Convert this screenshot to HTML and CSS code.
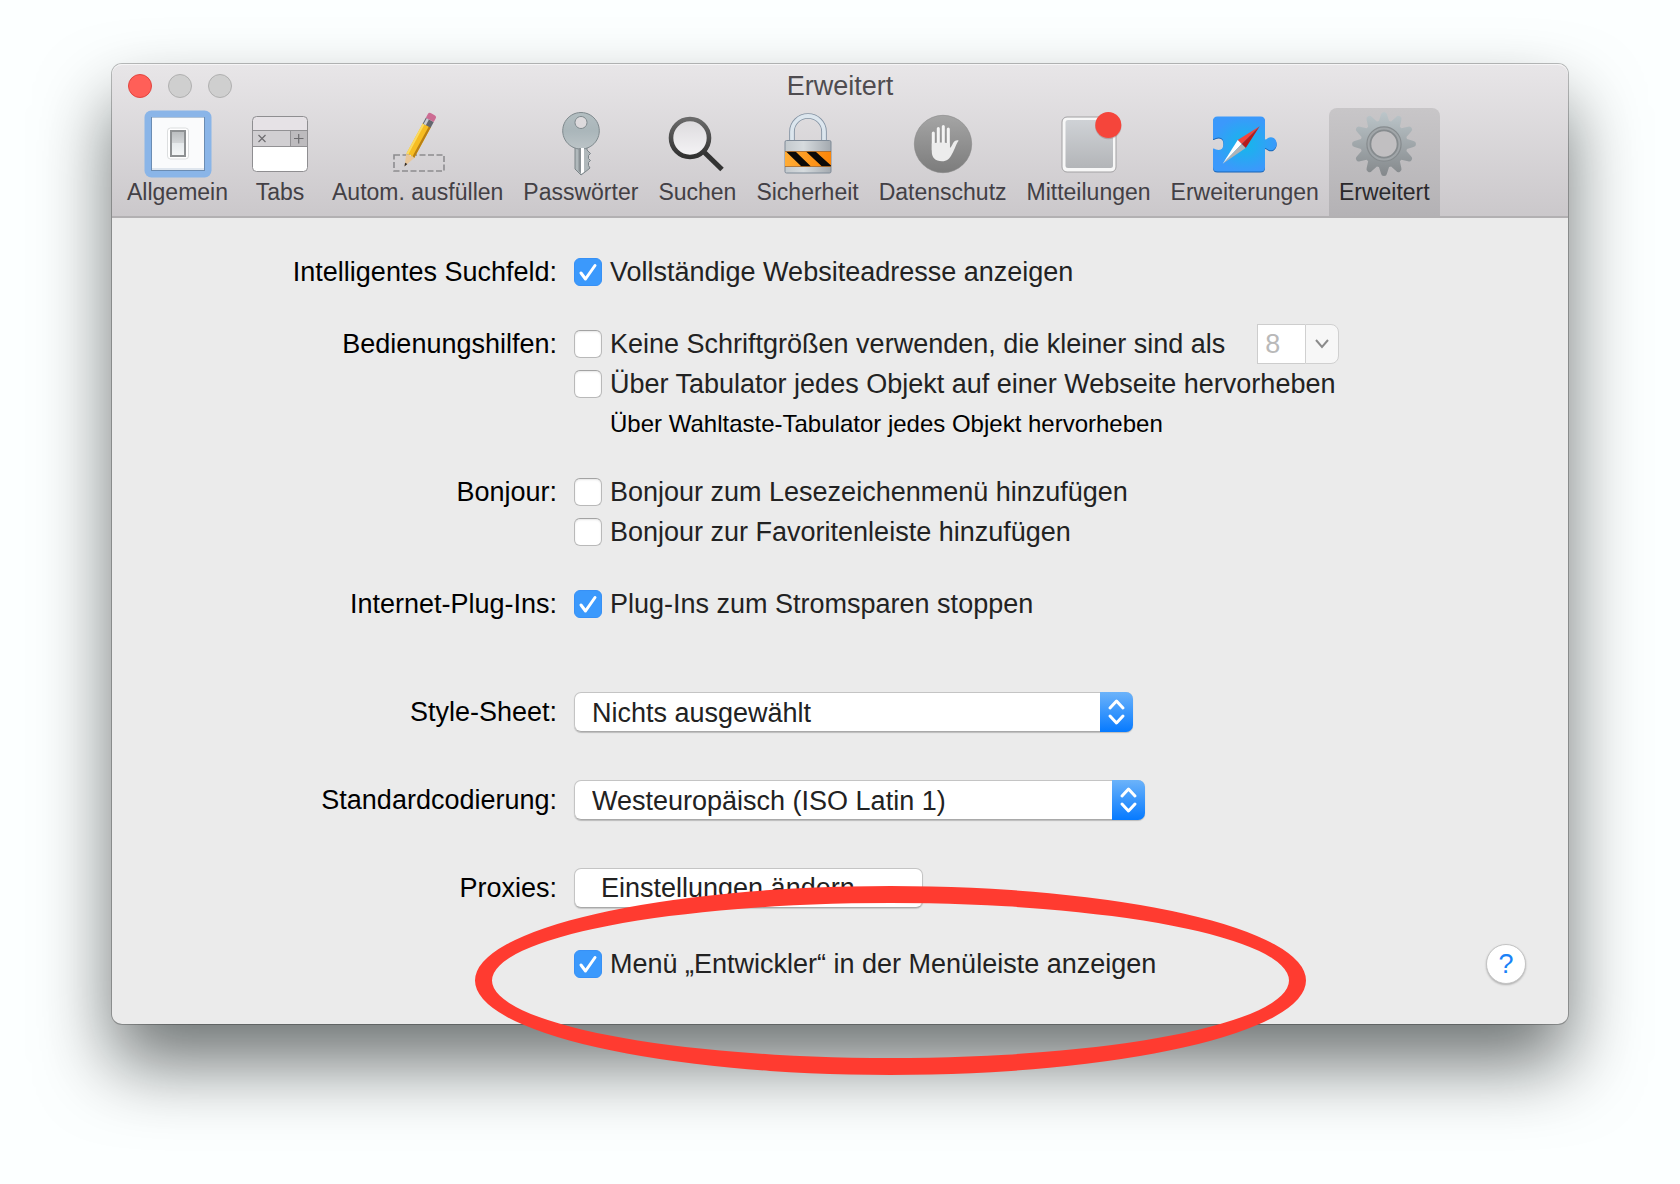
FILE: index.html
```
<!DOCTYPE html>
<html lang="de">
<head>
    <meta charset="UTF-8">
    <meta name="viewport" content="width=device-width, initial-scale=1.0">
    <title>Erweitert</title>
    <link rel="stylesheet" href="styles.css">
</head>
<body>
    <main class="window">
        <header class="toolbar">
            <div class="titlebar">
                <div class="lights">
                    <button type="button" class="light light-close" aria-label="Schließen"></button>
                    <button type="button" class="light" aria-label="Minimieren" disabled></button>
                    <button type="button" class="light" aria-label="Zoomen" disabled></button>
                </div>
                <h1>Erweitert</h1>
            </div>
            <nav class="tabs">
                <button type="button" class="tab">
                    <svg class="icon" viewBox="0 0 64 64" aria-hidden="true">
                        <defs>
                            <linearGradient id="switch" x1="0" y1="0" x2="0" y2="1">
                                <stop offset="0" stop-color="#b9bcbe"/>
                                <stop offset=".48" stop-color="#d3d6d8"/>
                                <stop offset=".5" stop-color="#e6eaec"/>
                                <stop offset="1" stop-color="#f4f6f7"/>
                            </linearGradient>
                        </defs>
                        <rect x="-1.5" y="-1.5" width="67" height="67" rx="7" fill="#8ab5e8"/>
                        <rect x="5" y="5" width="54" height="54" fill="#6b8cb2"/>
                        <rect x="6" y="5.5" width="52" height="51" fill="#fafbfc"/>
                        <rect x="6" y="56" width="52" height="2" fill="#dfe6ee"/>
                        <rect x="21.5" y="16" width="21" height="31" rx="3" fill="#fff" stroke="#dcdedf"/>
                        <rect x="25" y="19" width="14" height="25" fill="url(#switch)" stroke="#8e9193" stroke-width="2"/>
                    </svg>
                    <span>Allgemein</span>
                </button>
                <button type="button" class="tab">
                    <svg class="icon" viewBox="0 0 64 64" aria-hidden="true">
                        <rect x="4.5" y="4.5" width="55" height="55" rx="4" fill="#fff"/>
                        <path d="M4.5 18.5V8.5a4 4 0 0 1 4-4h47a4 4 0 0 1 4 4v10z" fill="#e6e2e6"/>
                        <path d="M4.5 18.5h38v16h-38z" fill="#d1cfd2"/>
                        <path d="M42.5 18.5h17v16h-17z" fill="#bdbbbe"/>
                        <path d="M4.5 18.5h55M4.5 34.5h55M42.5 18.5v16" stroke="#929194" fill="none"/>
                        <rect x="4.5" y="4.5" width="55" height="55" rx="4" fill="none" stroke="#8f8e91"/>
                        <path d="M10.5 23l7 7m0-7l-7 7M46 26.5h9.500M50.7 22v9.5" stroke="#6d6c6f" stroke-width="1.2" fill="none"/>
                    </svg>
                    <span>Tabs</span>
                </button>
                <button type="button" class="tab">
                    <svg class="icon" viewBox="0 0 64 64" aria-hidden="true">
                        <rect x="8" y="43" width="50" height="16" fill="none" stroke="#8d8c8f" stroke-width="1.6" stroke-dasharray="6 2.5"/>
                        <g transform="translate(18.5 54.5) rotate(28.5)">
                            <path d="M0 0L-4.5-12h9z" fill="#e9c79a"/>
                            <path d="M0 0l-1.3-3.5h2.6z" fill="#2d2a28"/>
                            <path d="M-4.5-12l1.5-1.5 1.5 1.5 1.5-1.5 1.5 1.5L3-13.5 4.5-12v-35h-9z" fill="#f6bd22"/>
                            <path d="M-4.5-12v-35h2v34z" fill="#fadb62"/>
                            <path d="M2.2-13v-34h2.3v35z" fill="#b97f12"/>
                            <path d="M-4.5-53h9v6.5h-9z" fill="#63666f"/>
                            <path d="M-3.5-53h2.5v6.5h-2.5z" fill="#c9ccd4"/>
                            <path d="M-4.5-53v-4q0-2.5 2.5-2.5h4q2.5 0 2.5 2.5v4z" fill="#cc6c93"/>
                        </g>
                    </svg>
                    <span>Autom. ausfüllen</span>
                </button>
                <button type="button" class="tab">
                    <svg class="icon" viewBox="0 0 64 64" aria-hidden="true">
                        <defs>
                            <linearGradient id="steel" x1="0" y1="0" x2="0" y2="1">
                                <stop offset="0" stop-color="#b3bec1"/>
                                <stop offset=".5" stop-color="#aab6ba"/>
                                <stop offset="1" stop-color="#bcc4c7"/>
                            </linearGradient>
                        </defs>
                        <path d="M26 36v21l6 6 6-4.5 3-2.500-1.5-2.500v-3l2-2-2-2v-3l2-2-3.5-3.5V36z" fill="#b0b8bb" stroke="#7b8488"/>
                        <path fill-rule="evenodd" d="M32 .5a18.300 18.300 0 1 0 .01 0zM32 4.5a6 6 0 1 1-.01 0z" fill="url(#steel)" stroke="#7f898d"/>
                        <path d="M29.5 36h3v26l-3-3z" fill="#8a9195"/>
                        <path d="M32 36h3v24l-3 2z" fill="#fff"/>
                    </svg>
                    <span>Passwörter</span>
                </button>
                <button type="button" class="tab">
                    <svg class="icon" viewBox="0 0 64 64" aria-hidden="true">
                        <defs>
                            <linearGradient id="rim" x1="0" y1="0" x2="0" y2="1">
                                <stop offset="0" stop-color="#6a6a6a"/>
                                <stop offset="1" stop-color="#303030"/>
                            </linearGradient>
                            <linearGradient id="glass" x1="0" y1="0" x2="0" y2="1">
                                <stop offset="0" stop-color="#dcdadd"/>
                                <stop offset="1" stop-color="#f5f4f6"/>
                            </linearGradient>
                        </defs>
                        <path d="M39 40l18 17.5" stroke="#333" stroke-width="5" fill="none"/>
                        <circle cx="25" cy="26" r="19" fill="url(#glass)" stroke="url(#rim)" stroke-width="4.6"/>
                    </svg>
                    <span>Suchen</span>
                </button>
                <button type="button" class="tab">
                    <svg class="icon" viewBox="0 0 64 64" aria-hidden="true">
                        <defs>
                            <linearGradient id="lock" x1="0" y1="0" x2="1" y2="0">
                                <stop offset="0" stop-color="#c3c9cd"/>
                                <stop offset=".4" stop-color="#d6dbde"/>
                                <stop offset="1" stop-color="#a3a9af"/>
                            </linearGradient>
                            <linearGradient id="orange" x1="0" y1="0" x2="1" y2="0">
                                <stop offset="0" stop-color="#ffac35"/>
                                <stop offset="1" stop-color="#fb8508"/>
                            </linearGradient>
                        </defs>
                        <path d="M16 30V19.500a16 15.500 0 0 1 32 0V30" stroke="#8493a3" stroke-width="5.6" fill="none"/>
                        <path d="M16 30V19.500a16 15.500 0 0 1 32 0V30" stroke="#dce6ee" stroke-width="3.8" fill="none"/>
                        <rect x="9" y="28.5" width="46" height="32.5" rx="1.5" fill="url(#lock)" stroke="#7f8b98"/>
                        <path d="M9 39.5h46v15H9z" fill="url(#orange)"/>
                        <path d="M10 39.5h9.500l15.500 15H25.500zM30 39.5h9.500L55 53.500v1h-9z" fill="#0c0a08"/>
                        <path d="M9 39.5h46M9 54.5h46" stroke="#a6672a" stroke-width=".8"/>
                    </svg>
                    <span>Sicherheit</span>
                </button>
                <button type="button" class="tab">
                    <svg class="icon" viewBox="0 0 64 64" aria-hidden="true">
                        <defs>
                            <linearGradient id="disc" x1="0" y1="0" x2="0" y2="1">
                                <stop offset="0" stop-color="#a5a5a5"/>
                                <stop offset="1" stop-color="#7c7c7c"/>
                            </linearGradient>
                        </defs>
                        <circle cx="32" cy="32" r="28.7" fill="url(#disc)" stroke="#868686" stroke-width=".6"/>
                        <path d="M22.3 21v17M27.3 16.500V36M32.3 14.500V36M37.3 17V36" stroke="#f4f4f4" stroke-width="3" stroke-linecap="round" fill="none"/>
                        <path d="M20.8 31.500q9-2 18 0v4.500c2-1 3-5.500 5-7 1.500-1 3.500-.8 3.800-.3-2.600 3-3.600 8.300-6.600 13.300-2.500 5-5 7.300-10 7.300-7 0-10.200-4.300-10.200-9.300z" fill="#ececec"/>
                    </svg>
                    <span>Datenschutz</span>
                </button>
                <button type="button" class="tab">
                    <svg class="icon" viewBox="0 0 64 64" aria-hidden="true">
                        <defs>
                            <linearGradient id="tile" x1="0" y1="0" x2="0" y2="1">
                                <stop offset="0" stop-color="#cfd2d6"/>
                                <stop offset="1" stop-color="#b3b5b8"/>
                            </linearGradient>
                        </defs>
                        <rect x="5" y="5" width="54" height="55" rx="5" fill="#f7f7f7" stroke="#a2a1a3"/>
                        <rect x="8.5" y="8" width="47.5" height="48" rx="2.5" fill="url(#tile)"/>
                        <circle cx="51.3" cy="14" r="13.2" fill="#8c5a5a" opacity=".35"/>
                        <circle cx="51.3" cy="13" r="13" fill="#f5453b"/>
                    </svg>
                    <span>Mitteilungen</span>
                </button>
                <button type="button" class="tab">
                    <svg class="icon" viewBox="0 0 64 64" aria-hidden="true">
                        <defs>
                            <radialGradient id="puzzle">
                                <stop offset="0" stop-color="#14b8ea"/>
                                <stop offset="1" stop-color="#3b99fb"/>
                            </radialGradient>
                            <path id="piece" d="M4.5 4.5h43q4.500 0 4.500 4.500v18.500q1.500 0 3-1.500a5.800 6.600 0 1 1 0 11.500q-1.500-1.500-3-1.500v19q0 4.500-4.500 4.500h-43Q0 59.500 0 55V36.500q1.500 0 3 1 7.500 2 7.500-5.800T3 26q-1.500 1-3 1V9q0-4.500 4.500-4.500z"/>
                        </defs>
                        <use href="#piece" y="1" fill="#1763b5"/>
                        <use href="#piece" fill="url(#puzzle)"/>
                        <path d="M46.7 14.3L24.7 28l4 4z" fill="#f4443c"/>
                        <path d="M46.7 14.3L32.7 36l-4-4z" fill="#b81a1a"/>
                        <path d="M9.7 51.7L24.7 28l4 4z" fill="#fff"/>
                        <path d="M9.7 51.7L32.7 36l-4-4z" fill="#b0b3b6"/>
                    </svg>
                    <span>Erweiterungen</span>
                </button>
                <button type="button" class="tab active" aria-current="page">
                    <svg class="icon" viewBox="0 0 64 64" aria-hidden="true">
                        <defs>
                            <linearGradient id="metal" x1="0" y1="0" x2="0" y2="1">
                                <stop offset="0" stop-color="#bcc6ca"/>
                                <stop offset="1" stop-color="#84888b"/>
                            </linearGradient>
                            <path id="tooth" d="M26 12l3-9.500q.4-2.500 3-2.500t3 2.500l3 9.500z"/>
                            <clipPath id="gear">
                                <circle cx="32" cy="32" r="23.5"/>
                                <use href="#tooth"/>
                                <use href="#tooth" transform="rotate(30 32 32)"/>
                                <use href="#tooth" transform="rotate(60 32 32)"/>
                                <use href="#tooth" transform="rotate(90 32 32)"/>
                                <use href="#tooth" transform="rotate(120 32 32)"/>
                                <use href="#tooth" transform="rotate(150 32 32)"/>
                                <use href="#tooth" transform="rotate(180 32 32)"/>
                                <use href="#tooth" transform="rotate(210 32 32)"/>
                                <use href="#tooth" transform="rotate(240 32 32)"/>
                                <use href="#tooth" transform="rotate(270 32 32)"/>
                                <use href="#tooth" transform="rotate(300 32 32)"/>
                                <use href="#tooth" transform="rotate(330 32 32)"/>
                            </clipPath>
                        </defs>
                        <rect width="64" height="64" fill="url(#metal)" clip-path="url(#gear)"/>
                        <circle cx="32" cy="32" r="15.2" fill="#c1bfc1" stroke="#868b8e" stroke-width="5"/>
                        <circle cx="32" cy="32" r="15.5" fill="none" stroke="#a1a6a9" stroke-width="2"/>
                    </svg>
                    <span>Erweitert</span>
                </button>
            </nav>
        </header>

        <form class="settings">
            <div class="row">
                <div class="caption">Intelligentes Suchfeld:</div>
                <div class="fields">
                    <label class="check"><input type="checkbox" checked> Vollständige Websiteadresse anzeigen</label>
                </div>
            </div>
            <div class="row">
                <div class="caption">Bedienungshilfen:</div>
                <div class="fields">
                    <div class="inline">
                        <label class="check"><input type="checkbox"> Keine Schriftgrößen verwenden, die kleiner sind als</label>
                        <div class="combo">
                            <input type="text" value="8" aria-label="Minimale Schriftgröße" disabled>
                            <button type="button" aria-label="Größe wählen" disabled>
                                <svg viewBox="0 0 16 12" aria-hidden="true"><path d="M2 2l6 7 6-7"/></svg>
                            </button>
                        </div>
                    </div>
                    <label class="check"><input type="checkbox"> Über Tabulator jedes Objekt auf einer Webseite hervorheben</label>
                    <p class="hint">Über Wahltaste-Tabulator jedes Objekt hervorheben</p>
                </div>
            </div>
            <div class="row row-bonjour">
                <div class="caption">Bonjour:</div>
                <div class="fields">
                    <label class="check"><input type="checkbox"> Bonjour zum Lesezeichenmenü hinzufügen</label>
                    <label class="check"><input type="checkbox"> Bonjour zur Favoritenleiste hinzufügen</label>
                </div>
            </div>
            <div class="row">
                <div class="caption">Internet-Plug-Ins:</div>
                <div class="fields">
                    <label class="check"><input type="checkbox" checked> Plug-Ins zum Stromsparen stoppen</label>
                </div>
            </div>
            <div class="row row-stylesheet">
                <label class="caption" for="stylesheet">Style-Sheet:</label>
                <div class="popup popup-stylesheet">
                    <select id="stylesheet">
                        <option>Nichts ausgewählt</option>
                    </select>
                    <svg class="arrows" viewBox="0 0 33 40" aria-hidden="true"><path d="M10 16l6.500-7 6.500 7M10 24l6.500 7 6.500-7"/></svg>
                </div>
            </div>
            <div class="row row-popup">
                <label class="caption" for="encoding">Standardcodierung:</label>
                <div class="popup popup-encoding">
                    <select id="encoding">
                        <option>Westeuropäisch (ISO Latin 1)</option>
                    </select>
                    <svg class="arrows" viewBox="0 0 33 40" aria-hidden="true"><path d="M10 16l6.500-7 6.500 7M10 24l6.500 7 6.500-7"/></svg>
                </div>
            </div>
            <div class="row row-popup">
                <div class="caption">Proxies:</div>
                <button type="button" class="push">Einstellungen ändern …</button>
            </div>
            <div class="row row-last">
                <div class="footer">
                    <label class="check"><input type="checkbox" checked> Menü „Entwickler“ in der Menüleiste anzeigen</label>
                    <button type="button" class="help" aria-label="Hilfe">?</button>
                </div>
            </div>
        </form>

        <!-- Markierung um die Option "Entwickler" -->
        <div class="marker"></div>
    </main>
</body>
</html>
```
FILE: styles.css
```
* {
    box-sizing: border-box;
}
body {
    margin: 0;
    padding: 64px 112px 160px;
    background-color: #fcffff;
    font-family: "Liberation Sans", Arial, sans-serif;
    font-size: 27px;
    line-height: 40px;
    color: #000;
}
button, input, select {
    font: inherit;
    margin: 0;
}
.window {
    position: relative;
    background-color: #ebebeb;
    border-radius: 10px;
    box-shadow: 0 0 0 1px rgba(0, 0, 0, 0.25), 0 40px 72px rgba(0, 8, 8, 0.56);
}

/* Titel und Symbolleiste */
.toolbar {
    background: linear-gradient(#e8e6e8, #cbc8cb);
    border-bottom: 2px solid #b2b0b2;
    border-radius: 10px 10px 0 0;
    box-shadow: inset 0 1px 0 #f6f5f6;
}
.titlebar {
    display: grid;
    grid-template-columns: 1fr auto 1fr;
    align-items: center;
    height: 44px;
    padding: 0 16px;
}
.titlebar h1 {
    margin: 0;
    font-size: 27px;
    font-weight: normal;
    color: #4f4c50;
}
.lights {
    display: flex;
    gap: 16px;
}
.light {
    width: 24px;
    height: 24px;
    padding: 0;
    border: 1px solid #b0b0b0;
    border-radius: 50%;
    background-color: #cfcfcf;
}
.light-close {
    border-color: #e2453f;
    background-color: #ff5f58;
}
.tabs {
    display: flex;
    padding: 0 5px;
}
.tab {
    display: flex;
    flex-direction: column;
    align-items: center;
    gap: 2px;
    height: 108px;
    padding: 4px 10px 0;
    border: none;
    border-radius: 8px 8px 0 0;
    background: none;
    font-size: 23px;
    line-height: 28px;
    white-space: nowrap;
    color: #434045;
}
.tab.active {
    background: linear-gradient(#c8c6c8, #b4b2b5);
    color: #2b292c;
}
.icon {
    width: 64px;
    height: 64px;
    overflow: visible;
}

/* Einstellungen */
.settings {
    display: flex;
    flex-direction: column;
    gap: 32px;
    padding: 34px 42px 40px 0;
}
.row {
    display: grid;
    grid-template-columns: 445px 1fr;
    column-gap: 17px;
}
.row-bonjour {
    margin-top: -4px;
}
.row-stylesheet {
    margin-top: 36px;
}
.row-popup {
    margin-top: 16px;
}
.row-last {
    margin-top: 4px;
}
.caption {
    text-align: right;
}
.inline {
    display: flex;
    gap: 32px;
}
.check {
    display: flex;
    align-items: center;
    gap: 8px;
    color: #222;
}
.check input {
    appearance: none;
    flex: none;
    width: 28px;
    height: 28px;
    border: 1px solid #b9b9b9;
    border-top-color: #a3a3a3;
    border-radius: 6px;
    background-color: #fff;
    box-shadow: inset 0 1px 2px rgba(0, 0, 0, 0.1);
}
.check input:checked {
    border-color: #3790f5;
    background: #3b99fc url("data:image/svg+xml,%3Csvg xmlns='http://www.w3.org/2000/svg' viewBox='0 0 26 26'%3E%3Cpath d='M6 14l4.500 6L20 6.500' fill='none' stroke='white' stroke-width='3' stroke-linecap='round' stroke-linejoin='round'/%3E%3C/svg%3E") center / 26px 26px no-repeat;
    box-shadow: none;
}
.hint {
    margin: 0;
    padding-left: 36px;
    font-size: 24px;
}
.combo {
    display: flex;
    height: 40px;
}
.combo input {
    width: 48px;
    padding: 0 0 0 7px;
    border: 1px solid #cdcdcd;
    border-right: none;
    border-radius: 0;
    background-color: #fff;
    color: #b9b9b9;
}
.combo button {
    display: flex;
    align-items: center;
    justify-content: center;
    width: 34px;
    padding: 0;
    border: 1px solid #d0d0d0;
    border-radius: 0 8px 8px 0;
    background-color: #f7f7f7;
}
.combo svg {
    width: 16px;
    height: 12px;
    fill: none;
    stroke: #8b8b8b;
    stroke-width: 2;
}
.popup {
    position: relative;
    height: 40px;
    border-radius: 7px;
    box-shadow: 0 1px 1px rgba(0, 0, 0, 0.2);
}
.popup-stylesheet {
    width: 559px;
}
.popup-encoding {
    width: 571px;
}
.popup select {
    appearance: none;
    display: block;
    width: 100%;
    height: 40px;
    padding: 0 40px 0 17px;
    border: 1px solid #c4c4c4;
    border-bottom-color: #a9a9a9;
    border-radius: 7px;
    background-color: #fff;
    color: #222;
}
.arrows {
    position: absolute;
    top: 0;
    right: 0;
    width: 33px;
    height: 40px;
    border-radius: 0 7px 7px 0;
    background: linear-gradient(#6cb3fa, #067aff);
    fill: none;
    stroke: #fff;
    stroke-width: 3;
    stroke-linecap: round;
    stroke-linejoin: round;
    pointer-events: none;
}
.push {
    justify-self: start;
    width: 349px;
    height: 40px;
    padding: 0 26px;
    border: 1px solid #c4c4c4;
    border-bottom-color: #a9a9a9;
    border-radius: 7px;
    background-color: #fff;
    box-shadow: 0 1px 1px rgba(0, 0, 0, 0.15);
    text-align: left;
    line-height: 36px;
    white-space: nowrap;
    color: #222;
}
.footer {
    grid-column: 2;
    display: flex;
    justify-content: space-between;
}
.help {
    width: 40px;
    height: 40px;
    padding: 0;
    border: 1px solid #c4c4c4;
    border-radius: 50%;
    background-color: #fff;
    box-shadow: 0 1px 2px rgba(0, 0, 0, 0.25);
    line-height: 38px;
    color: #1a82f7;
}
.marker {
    position: absolute;
    left: 363px;
    bottom: -51px;
    width: 831px;
    height: 189px;
    border: 17px solid #ff3b30;
    border-radius: 50%;
    pointer-events: none;
}
```
